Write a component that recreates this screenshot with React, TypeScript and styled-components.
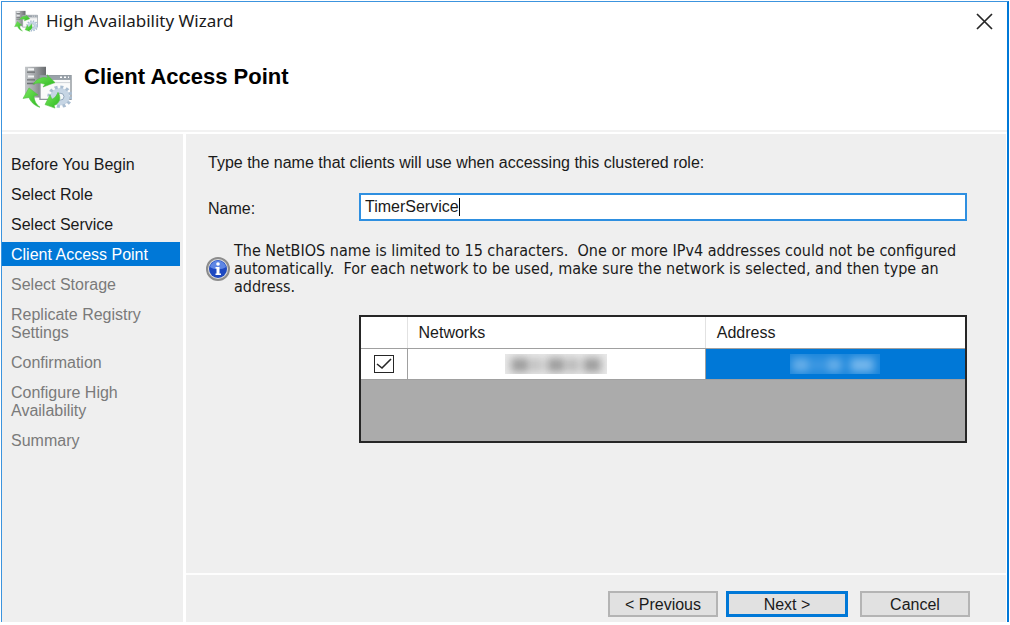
import React, { useState } from "react";
import styled, { createGlobalStyle, css } from "styled-components";

const GlobalStyle = createGlobalStyle`
  *, *::before, *::after { box-sizing: border-box; }
  body {
    margin: 0;
    padding: 1px 1px 3px;
    background: #ffffff;
    color: #1a1a1a;
    font-family: "Liberation Sans", Arial, sans-serif;
    font-size: 16px;
    line-height: 18px;
  }
`;

const Window = styled.div`
  display: flex;
  flex-direction: column;
  min-height: calc(100vh - 4px);
  border: 1px solid #3c94de;
  border-right: 2px solid #0078d7;
  border-bottom: 0;
  background: #ffffff;
`;

const TitleBar = styled.div`
  display: flex;
  align-items: center;
  gap: 8px;
  height: 40px;
  padding: 0 12px 2px;
`;

const TitleText = styled.span`
  flex: 1;
  font-family: "Noto Sans", "Segoe UI", sans-serif;
  font-size: 17px;
  line-height: 24px;
`;

const CloseButton = styled.button`
  display: flex;
  padding: 2px;
  border: 0;
  background: none;
`;

const PageHeader = styled.header`
  display: flex;
  align-items: flex-start;
  gap: 12px;
  height: 90px;
  padding: 23px 20px 0;
  border-bottom: 2px solid #f2f2f2;
`;

const PageTitle = styled.h1`
  margin: 0;
  color: #000000;
  font-size: 22px;
  line-height: 24px;
`;

const Body = styled.div`
  display: flex;
  flex: 1;
  gap: 3px;
  padding: 2px 1px 0 0;
`;

const Steps = styled.nav`
  flex: 0 0 181px;
  padding: 18px 3px 0 0;
  background: #efefef;
`;

const StepList = styled.ol`
  display: flex;
  flex-direction: column;
  gap: 6px;
  margin: 0;
  padding: 0;
  list-style: none;
`;

type StepState = "done" | "current" | "pending";

const Step = styled.li<{ $state: StepState }>`
  padding: 4px 24px 2px 9px;
  color: ${(p) => (p.$state === "pending" ? "#7a7a7a" : "#1a1a1a")};
  ${(p) =>
    p.$state === "current" &&
    css`
      background: #0078d7;
      color: #ffffff;
    `}
`;

const Main = styled.main`
  display: flex;
  flex: 1;
  flex-direction: column;
  min-width: 0;
  background: #efefef;
`;

const Form = styled.form`
  flex: 1;
  padding: 20px 39px 20px 22px;
`;

const Intro = styled.p`
  margin: 0 0 21px;
`;

const Field = styled.div`
  display: grid;
  grid-template-columns: 151px 1fr;
  align-items: center;
`;

const Label = styled.label`
  padding-top: 3px;
`;

const NameBox = styled.div`
  display: flex;
  align-items: center;
  height: 28px;
  border: 2px solid #2e8fe0;
  background: #ffffff;
`;

const NameInput = styled.input`
  field-sizing: content;
  padding: 0 0 0 4px;
  border: 0;
  outline: 0;
  background: none;
  color: inherit;
  font: inherit;
`;

const Caret = styled.span`
  width: 1px;
  height: 18px;
  background: #000000;
`;

const Note = styled.div`
  display: flex;
  align-items: center;
  gap: 4px;
  margin: 21px 0 19px -2px;
  svg { flex: none; }
`;

const NoteText = styled.p`
  margin: 0;
  font-family: "DejaVu Sans Condensed", Tahoma, sans-serif;
  font-size: 16px;
  line-height: 18px;
  white-space: pre-wrap;
`;

const GridFrame = styled.div`
  min-height: 128px;
  margin-left: 151px;
  border: 2px solid #262626;
  background: #ababab;
`;

const Table = styled.table`
  width: 100%;
  border-collapse: collapse;
  table-layout: fixed;
  background: #ffffff;
`;

const HeadCell = styled.th<{ $width?: string }>`
  width: ${(p) => p.$width ?? "auto"};
  height: 31px;
  padding: 2px 11px 0;
  border-right: 1px solid #e2e2e2;
  border-bottom: 1px solid #a0a0a0;
  font-weight: normal;
  text-align: left;
  &:last-child { border-right: 0; }
`;

const Cell = styled.td<{ $selected?: boolean }>`
  height: 31px;
  padding: 0;
  border-right: 1px solid #a0a0a0;
  border-bottom: 1px solid #a0a0a0;
  background: ${(p) => (p.$selected ? "#0078d7" : "#ffffff")};
  text-align: center;
  &:last-child { border-right: 0; }
  svg { display: block; margin: 0 auto; }
`;

const CheckBox = styled.input`
  appearance: none;
  display: block;
  width: 20px;
  height: 18px;
  margin: 0 auto;
  border: 1px solid #262626;
  background: #ffffff;
  &:checked {
    background: #ffffff
      url("data:image/svg+xml,%3Csvg xmlns='http://www.w3.org/2000/svg' viewBox='0 0 18 16'%3E%3Cpath d='M2 8l5 4 9-9' fill='none' stroke='%23262626' stroke-width='1.6'/%3E%3C/svg%3E")
      center / 18px 16px no-repeat;
  }
`;

const Footer = styled.footer`
  display: flex;
  justify-content: flex-end;
  gap: 8px;
  padding: 16px 36px 5px;
  border-top: 2px solid #fdfdfd;
`;

const Button = styled.button<{ $primary?: boolean }>`
  width: ${(p) => (p.$primary ? "122px" : "110px")};
  height: 26px;
  padding: 2px 0 0;
  border: ${(p) => (p.$primary ? "3px solid #0078d7" : "2px solid #b4b4b4")};
  background: #e1e1e1;
  color: #1a1a1a;
  font: inherit;
  &:last-child { margin-left: 4px; }
`;

const WizardIcon = ({ width, height }: { width: number; height: number }) => (
  <svg width={width} height={height} viewBox="0 0 50 50" preserveAspectRatio="none" aria-hidden="true">
    <defs>
      <linearGradient id={`tower${width}`} x1="0" x2="1" y1="0" y2="0">
        <stop offset="0" stopColor="#c4c7ca" />
        <stop offset="0.45" stopColor="#a2a5a8" />
        <stop offset="1" stopColor="#686b6e" />
      </linearGradient>
      <linearGradient id={`leaf${width}`} x1="0" x2="1" y1="0" y2="1">
        <stop offset="0" stopColor="#7ce860" />
        <stop offset="1" stopColor="#2bb81f" />
      </linearGradient>
    </defs>
    <path d="M3 2h21v35H3z" fill={`url(#tower${width})`} />
    <path d="M5 8h8M5 17h8M5 21h8" stroke="#6d7073" strokeWidth="1.5" />
    <path d="M6 5h6M6 13h6" stroke="#f4f5f6" strokeWidth="2.4" />
    <path d="M18 12h31v27H18z" fill="#fafafa" stroke="#8f969c" strokeWidth="1.4" />
    <path d="M18 12h31v5H18z" fill="#9aa2aa" />
    <path d="M38 14h2M42 14h2M46 14h1" stroke="#fff" strokeWidth="1.6" />
    <path d="M19 20h29" stroke="#ccd0d4" />
    <circle cx="38" cy="36" r="7" fill="none" stroke="#c6d5e4" strokeWidth="6" />
    <circle cx="38" cy="36" r="11" fill="none" stroke="#a9bdd1" strokeWidth="3.4" strokeDasharray="3 2.76" />
    <circle cx="38" cy="36" r="4" fill="#f4f7fa" stroke="#8ca2b7" />
    <g fill={`url(#leaf${width})`} stroke="#4fc03c" strokeWidth="0.6">
      <path d="M11 22c4-7 10-9 15-7l-1-4 8 9-12 5 2-3c-5-2-8-2-12 0z" />
      <path d="M1 38l6-12 9 8-4 1c0 5 2 10 6 13-4-1-9-5-11-11z" />
      <path d="M36 31c4 7 1 13-4 15l1 3-10-4 5-11 2 5c3-2 5-4 6-8z" />
    </g>
  </svg>
);

const InfoIcon = () => (
  <svg width="24" height="24" viewBox="0 0 24 24" aria-hidden="true">
    <circle cx="12" cy="12" r="11" fill="#dcdcdc" stroke="#8c8c8c" strokeWidth="2" />
    <circle cx="12" cy="12" r="9" fill="#1f49c0" />
    <path d="M4 10a8.200 8.200 0 0 1 16 0c-4 3-12 3-16 0z" fill="#5e86e4" />
    <circle cx="12" cy="7" r="1.800" fill="#fff" />
    <path d="M9.500 10h4v6.500h1.500V18H9.500v-1.500h1v-5h-1z" fill="#fff" />
  </svg>
);

const Redacted = ({ width, color, marks }: { width: number; color: string; marks: number[][] }) => (
  <svg width={width} height="20" viewBox={`0 0 ${width} 20`} role="img" aria-label="Redacted">
    <filter id={`haze${width}`} x="-10%" y="-60%" width="120%" height="220%">
      <feGaussianBlur stdDeviation="4" />
    </filter>
    <rect width={width} height="20" fill={color} opacity="0.14" />
    <g filter={`url(#haze${width})`} fill={color}>
      {marks.map(([x, w, o]) => (
        <rect key={x} x={x} y="4" width={w} height="14" opacity={o / 10} />
      ))}
    </g>
  </svg>
);

const steps: { label: string; state: StepState }[] = [
  { label: "Before You Begin", state: "done" },
  { label: "Select Role", state: "done" },
  { label: "Select Service", state: "done" },
  { label: "Client Access Point", state: "current" },
  { label: "Select Storage", state: "pending" },
  { label: "Replicate Registry Settings", state: "pending" },
  { label: "Confirmation", state: "pending" },
  { label: "Configure High Availability", state: "pending" },
  { label: "Summary", state: "pending" },
];

export default function App() {
  const [name, setName] = useState("TimerService");
  const [used, setUsed] = useState(true);
  return (
    <>
      <GlobalStyle />
      <Window>
        <TitleBar>
          <WizardIcon width={24} height={22} />
          <TitleText>High Availability Wizard</TitleText>
          <CloseButton type="button" aria-label="Close">
            <svg width="17" height="17" viewBox="0 0 17 17" aria-hidden="true">
              <path d="M1 1l15 15M16 1L1 16" stroke="#262626" strokeWidth="1.7" />
            </svg>
          </CloseButton>
        </TitleBar>
        <PageHeader>
          <WizardIcon width={50} height={44} />
          <PageTitle>Client Access Point</PageTitle>
        </PageHeader>
        <Body>
          <Steps aria-label="Wizard steps">
            <StepList>
              {steps.map((s) => (
                <Step key={s.label} $state={s.state} aria-current={s.state === "current" ? "step" : undefined}>
                  {s.label}
                </Step>
              ))}
            </StepList>
          </Steps>
          <Main>
            <Form id="access-point" onSubmit={(e) => e.preventDefault()}>
              <Intro>Type the name that clients will use when accessing this clustered role:</Intro>
              <Field>
                <Label htmlFor="name">Name:</Label>
                <NameBox>
                  <NameInput id="name" value={name} onChange={(e) => setName(e.target.value)} />
                  <Caret />
                </NameBox>
              </Field>
              <Note>
                <InfoIcon />
                <NoteText>
                  {"The NetBIOS name is limited to 15 characters.  One or more IPv4 addresses could not be configured automatically.  For each network to be used, make sure the network is selected, and then type an address."}
                </NoteText>
              </Note>
              <GridFrame>
                <Table>
                  <thead>
                    <tr>
                      <HeadCell $width="46px" aria-label="Use" />
                      <HeadCell>Networks</HeadCell>
                      <HeadCell $width="43%">Address</HeadCell>
                    </tr>
                  </thead>
                  <tbody>
                    <tr>
                      <Cell>
                        <CheckBox type="checkbox" aria-label="Use this network" checked={used} onChange={(e) => setUsed(e.target.checked)} />
                      </Cell>
                      <Cell>
                        <Redacted width={102} color="#666666" marks={[[6, 18, 6], [28, 8, 4], [42, 18, 6], [64, 8, 5], [78, 18, 6]]} />
                      </Cell>
                      <Cell $selected>
                        <Redacted width={90} color="#b4d8f8" marks={[[2, 18, 5], [24, 8, 3], [36, 16, 5], [60, 24, 6]]} />
                      </Cell>
                    </tr>
                  </tbody>
                </Table>
              </GridFrame>
            </Form>
            <Footer>
              <Button type="button">&lt; Previous</Button>
              <Button type="submit" form="access-point" $primary>Next &gt;</Button>
              <Button type="button">Cancel</Button>
            </Footer>
          </Main>
        </Body>
      </Window>
    </>
  );
}
